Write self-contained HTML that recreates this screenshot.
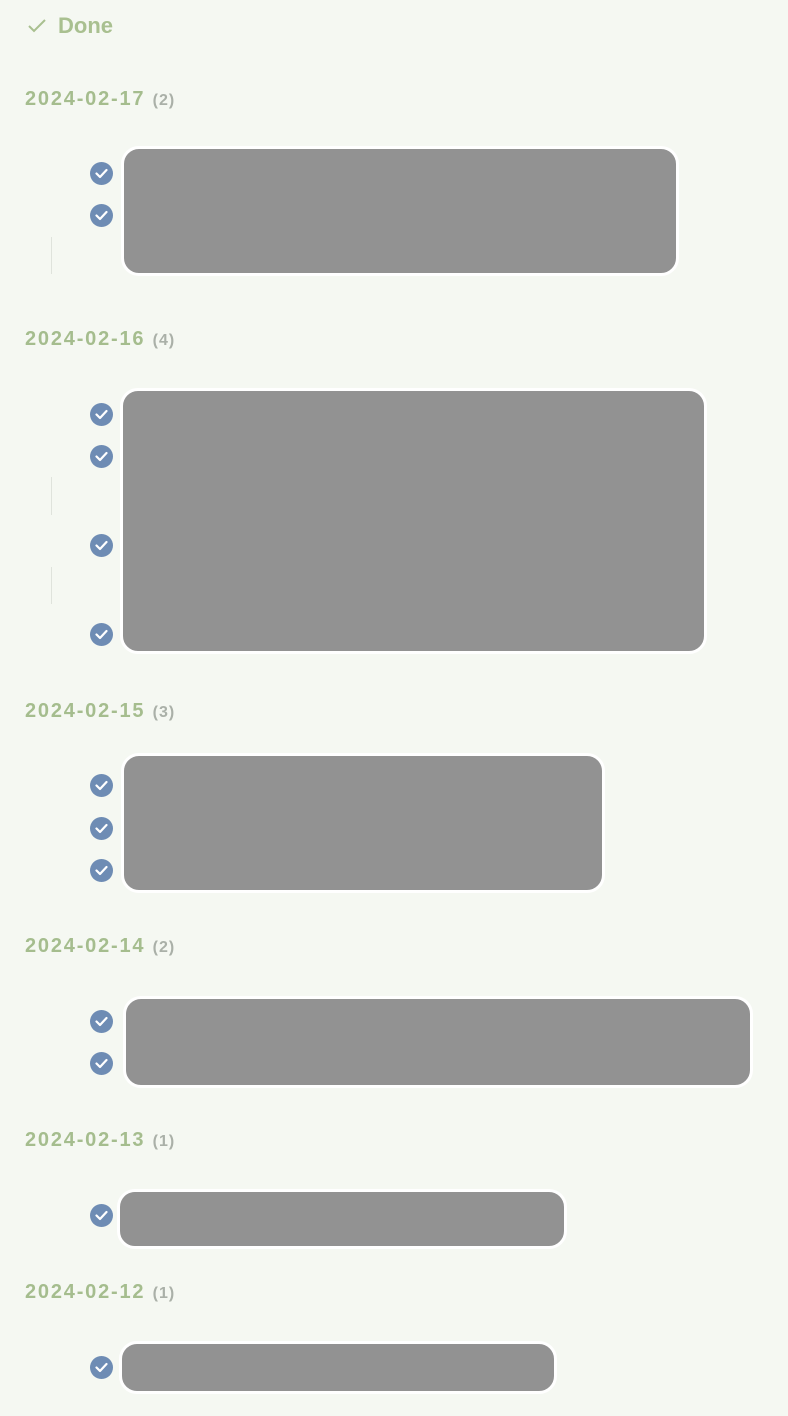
<!DOCTYPE html>
<html><head><meta charset="utf-8"><style>
body{margin:0;width:788px;height:1416px;background:#f5f8f2;position:relative;overflow:hidden;font-family:"Liberation Sans",sans-serif}
.h{position:absolute;left:25px;font-size:20px;font-weight:bold;color:#a5bd8e;line-height:22px;letter-spacing:1.8px}
.h span{font-size:16px;color:#aab0a8;letter-spacing:1px}
.c{position:absolute;left:90px;width:23px;height:23px;border-radius:50%;background:#6e8cb4}
.c svg{position:absolute;left:5px;top:6px}
.b{position:absolute;background:#929292;border:3px solid #fff;border-radius:18px;box-sizing:border-box}
.l{position:absolute;left:51px;width:1px;background:#dfe3dc}
</style></head><body>
<div style="position:absolute;left:27px;top:14px;font-size:22px;font-weight:bold;color:#a9c090;line-height:24px">
<svg width="20" height="16" viewBox="0 0 20 16" style="vertical-align:-1px;margin-right:11px"><path d="M2 8l5 5L18 2" fill="none" stroke="#a9c090" stroke-width="2"/></svg>Done</div>

<div class="h" style="top:88px">2024-02-17 <span>(2)</span></div>
<div class="h" style="top:328px">2024-02-16 <span>(4)</span></div>
<div class="h" style="top:700px">2024-02-15 <span>(3)</span></div>
<div class="h" style="top:935px">2024-02-14 <span>(2)</span></div>
<div class="h" style="top:1129px">2024-02-13 <span>(1)</span></div>
<div class="h" style="top:1281px">2024-02-12 <span>(1)</span></div>

<div class="l" style="top:237px;height:37px"></div>
<div class="l" style="top:477px;height:38px"></div>
<div class="l" style="top:567px;height:37px"></div>

<div class="b" style="left:121px;top:146px;width:558px;height:130px"></div>
<div class="b" style="left:120px;top:388px;width:587px;height:266px"></div>
<div class="b" style="left:121px;top:753px;width:484px;height:140px"></div>
<div class="b" style="left:123px;top:996px;width:630px;height:92px"></div>
<div class="b" style="left:117px;top:1189px;width:450px;height:60px"></div>
<div class="b" style="left:119px;top:1341px;width:438px;height:53px"></div>

<script>
[173,215,414,456,545,634,785,828,870,1021,1063,1215,1367].forEach(function(y){
var d=document.createElement('div');d.className='c';d.style.top=(y-11.5)+'px';
d.innerHTML='<svg width="13" height="11" viewBox="0 0 13 11"><path d="M1.5 5.5l3.5 3.5 6.5-7" fill="none" stroke="#fff" stroke-width="2.2" stroke-linecap="round" stroke-linejoin="round"/></svg>';
document.body.appendChild(d);});
</script>
</body></html>
